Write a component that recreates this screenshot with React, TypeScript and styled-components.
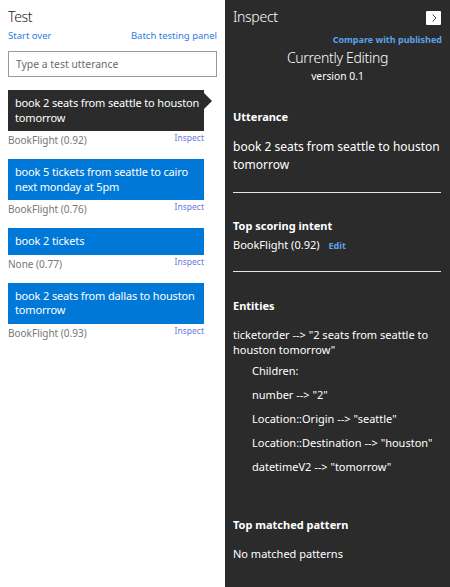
import React from "react";
import styled, { createGlobalStyle } from "styled-components";

const Global = createGlobalStyle`
  html, body { margin: 0; padding: 0; }
  body { font-family: "Noto Sans", "Open Sans", sans-serif; background: #fff; }
`;

const Page = styled.div`
  display: grid;
  grid-template-columns: 225px 225px;
  width: 450px;
  height: 587px;
  overflow: hidden;
`;

const Left = styled.div`
  background: #fff;
  padding: 6px 8px 0 8px;
  display: flex;
  flex-direction: column;
`;

const Right = styled.div`
  background: #2b2b2b;
  color: #fff;
  padding: 6px 8px 0 8px;
  display: flex;
  flex-direction: column;
`;

const PanelTitle = styled.div<{ $dark?: boolean }>`
  font-size: 14px;
  font-weight: 300;
  letter-spacing: -0.3px;
  line-height: 22px;
  color: ${(p) => (p.$dark ? "#fff" : "#222")};
`;

const LinkRow = styled.div`
  display: flex;
  justify-content: space-between;
  font-size: 9.5px;
  line-height: 13px;
  margin-top: 1px;
`;

const Link = styled.span`
  color: #2b7de0;
`;

const Input = styled.div`
  margin-top: 9px;
  height: 24px;
  border: 1px solid #9a9a9a;
  display: flex;
  align-items: center;
  padding-left: 7px;
  font-size: 10.4px;
  color: #6a6a6a;
`;

const List = styled.div`
  display: flex;
  flex-direction: column;
  margin-top: 13px;
  width: 196px;
`;

const Item = styled.div`
  margin-bottom: 10px;
`;

const Bubble = styled.div<{ $selected?: boolean }>`
  position: relative;
  background: ${(p) => (p.$selected ? "#2b2b2b" : "#0078d7")};
  color: #fff;
  font-size: 11px;
  letter-spacing: -0.15px;
  line-height: 14.5px;
  padding: 6px 3px 6px 7px;
  ${(p) =>
    p.$selected
      ? `&::after {
    content: "";
    position: absolute;
    right: -8px;
    top: 3px;
    border-left: 8px solid #2b2b2b;
    border-top: 8px solid transparent;
    border-bottom: 8px solid transparent;
  }`
      : ""}
`;

const Meta = styled.div`
  display: flex;
  justify-content: space-between;
  align-items: flex-start;
  height: 18px;
`;

const Intent = styled.span`
  font-size: 10px;
  color: #777;
  line-height: 13px;
  margin-top: 3px;
`;

const InspectLink = styled.span`
  font-size: 8.5px;
  color: #6b78e0;
  line-height: 13px;
`;

const TitleRow = styled.div`
  display: flex;
  justify-content: space-between;
  align-items: center;
`;

const ChevronBox = styled.div`
  width: 15px;
  height: 14px;
  background: #fff;
  border-radius: 1px;
  display: flex;
  align-items: center;
  justify-content: center;
  margin-right: 1px;
  margin-top: 2px;
`;

const Compare = styled.div`
  text-align: right;
  font-size: 9px;
  font-weight: 700;
  color: #5ba2ec;
  line-height: 13px;
  margin-top: 5px;
`;

const Editing = styled.div`
  text-align: center;
  font-size: 14px;
  font-weight: 300;
  letter-spacing: -0.3px;
  line-height: 20px;
  margin-top: 2px;
`;

const Version = styled.div`
  text-align: center;
  font-size: 10.3px;
  line-height: 16px;
`;

const Section = styled.div<{ $top: number }>`
  margin-top: ${(p) => p.$top}px;
`;

const Heading = styled.div`
  font-size: 11px;
  font-weight: 700;
  line-height: 16px;
`;

const Body = styled.div<{ $indent?: boolean; $gap?: number; $large?: boolean; $lh?: number }>`
  font-size: ${(p) => (p.$large ? "12px" : "11px")};
  line-height: ${(p) => p.$lh ?? 17}px;
  padding-left: ${(p) => (p.$indent ? "19px" : "0")};
  margin-top: ${(p) => p.$gap ?? 0}px;
`;

const Divider = styled.div<{ $top: number }>`
  height: 1px;
  background: #e6e6e6;
  margin-top: ${(p) => p.$top}px;
  margin-right: 1px;
`;

const EditLink = styled.span`
  color: #5ba2ec;
  font-size: 9px;
  font-weight: 700;
  margin-left: 9px;
`;

const items = [
  { text: "book 2 seats from seattle to houston tomorrow", intent: "BookFlight (0.92)", selected: true },
  { text: "book 5 tickets from seattle to cairo next monday at 5pm", intent: "BookFlight (0.76)" },
  { text: "book 2 tickets", intent: "None (0.77)" },
  { text: "book 2 seats from dallas to houston tomorrow", intent: "BookFlight (0.93)" },
];

export default function App() {
  return (
    <>
      <Global />
      <Page>
        <Left>
          <PanelTitle>Test</PanelTitle>
          <LinkRow>
            <Link>Start over</Link>
            <Link>Batch testing panel</Link>
          </LinkRow>
          <Input>Type a test utterance</Input>
          <List>
            {items.map((it) => (
              <Item key={it.text}>
                <Bubble $selected={it.selected}>{it.text}</Bubble>
                <Meta>
                  <Intent>{it.intent}</Intent>
                  <InspectLink>Inspect</InspectLink>
                </Meta>
              </Item>
            ))}
          </List>
        </Left>
        <Right>
          <TitleRow>
            <PanelTitle $dark>Inspect</PanelTitle>
            <ChevronBox>
              <svg width="8" height="10" viewBox="0 0 8 10">
                <path d="M2.5 1.5 L6 5 L2.5 8.5" fill="none" stroke="#444" strokeWidth="1" />
              </svg>
            </ChevronBox>
          </TitleRow>
          <Compare>Compare with published</Compare>
          <Editing>Currently Editing</Editing>
          <Version>version 0.1</Version>
          <Section $top={25}>
            <Heading>Utterance</Heading>
            <Body $large $lh={18} $gap={13}>book 2 seats from seattle to houston tomorrow</Body>
          </Section>
          <Divider $top={18} />
          <Section $top={25}>
            <Heading>Top scoring intent</Heading>
            <Body $gap={2}>
              BookFlight (0.92)<EditLink>Edit</EditLink>
            </Body>
          </Section>
          <Divider $top={17} />
          <Section $top={26}>
            <Heading>Entities</Heading>
            <Body $gap={13} $lh={15}>
              ticketorder --&gt; "2 seats from seattle to houston tomorrow"
            </Body>
            <Body $indent $gap={5}>Children:</Body>
            <Body $indent $gap={7}>number --&gt; "2"</Body>
            <Body $indent $gap={7}>Location::Origin --&gt; "seattle"</Body>
            <Body $indent $gap={7}>Location::Destination --&gt; "houston"</Body>
            <Body $indent $gap={7}>datetimeV2 --&gt; "tomorrow"</Body>
          </Section>
          <Section $top={42}>
            <Heading>Top matched pattern</Heading>
            <Body $gap={12}>No matched patterns</Body>
          </Section>
        </Right>
      </Page>
    </>
  );
}
